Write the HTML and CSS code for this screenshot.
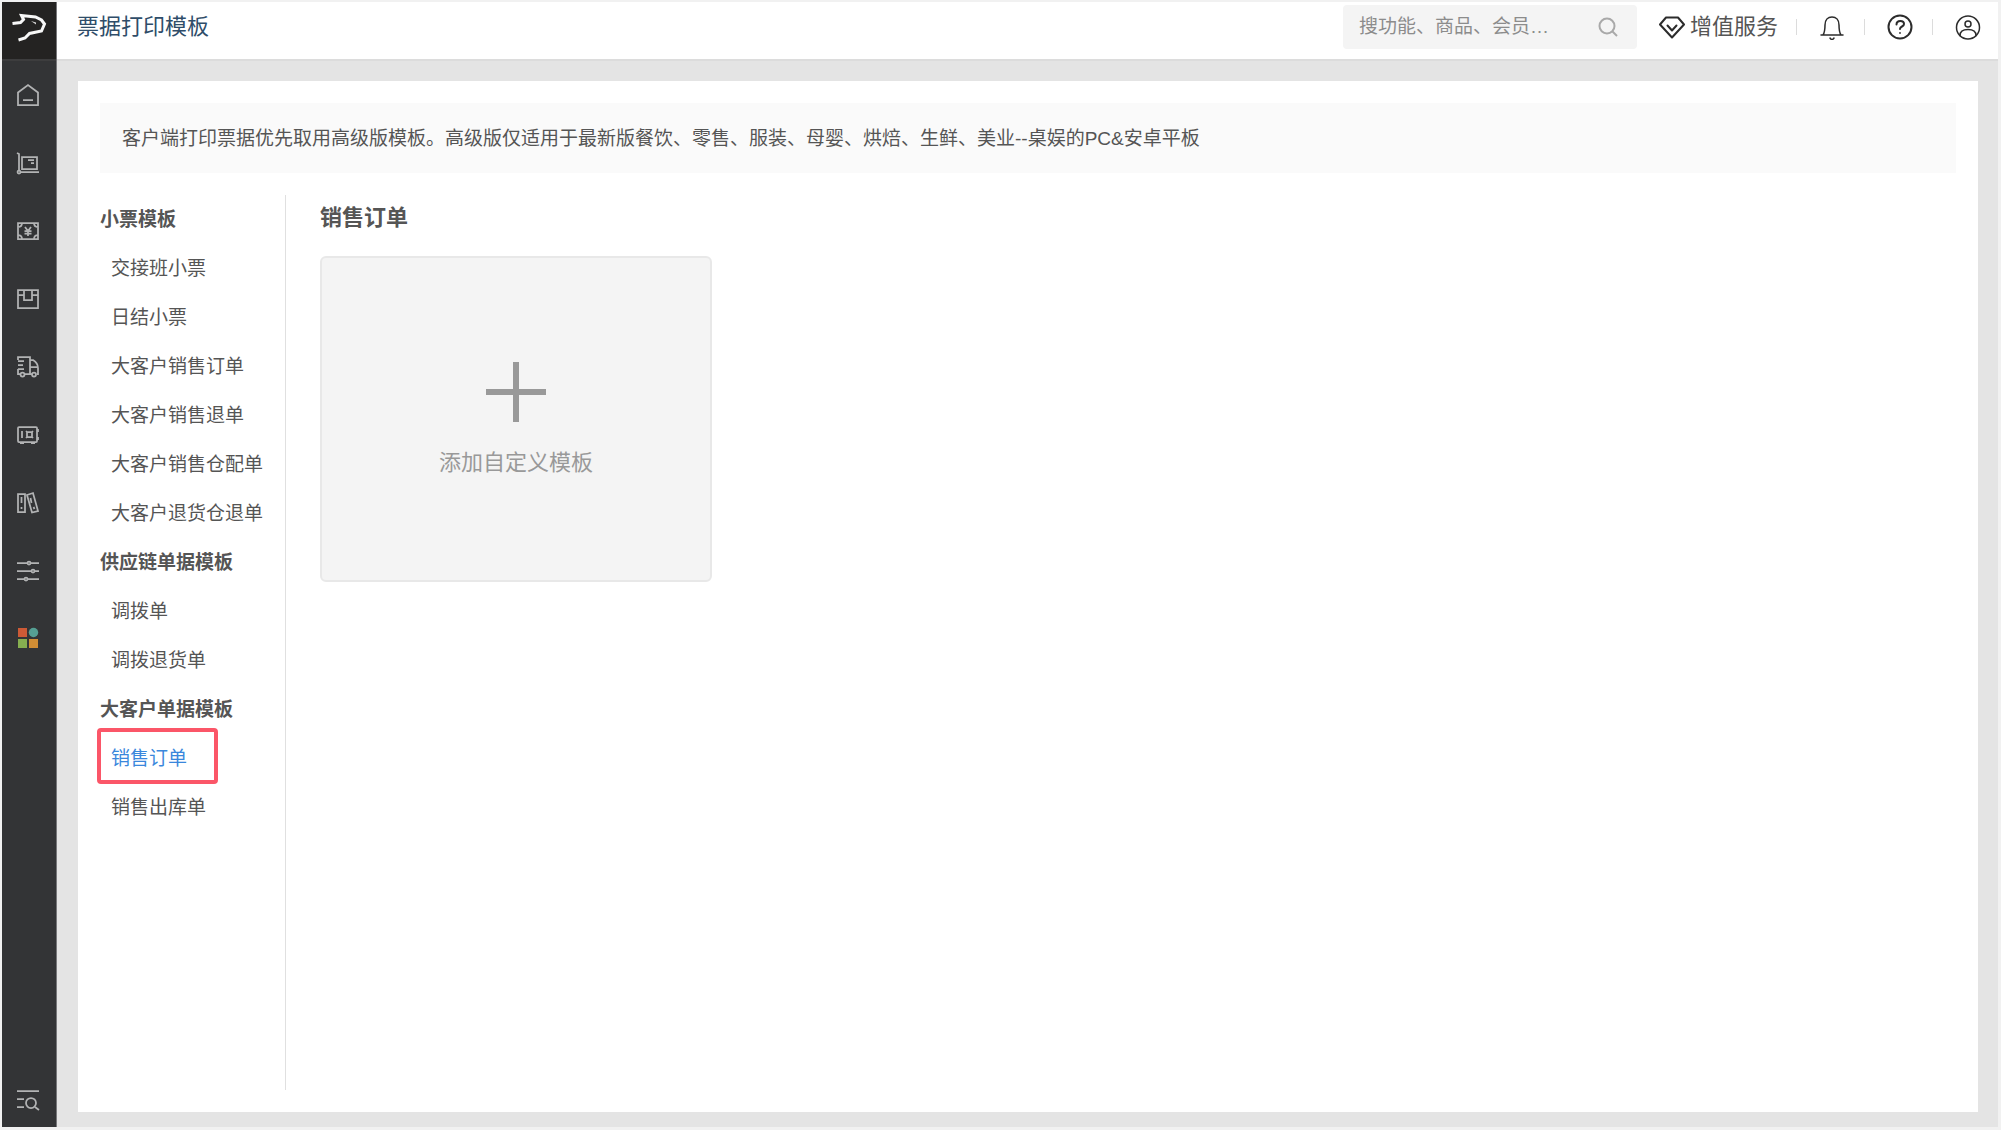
FILE: index.html
```html
<!DOCTYPE html>
<html lang="zh-CN">
<head>
    <meta charset="UTF-8">
    <meta name="viewport" content="width=device-width, initial-scale=1.0">
    <title>票据打印模板</title>
    <link rel="stylesheet" href="styles.css">
</head>
<body>
    <div class="app">
        <nav class="sidebar" aria-label="主导航">
            <a class="logo" href="#" aria-label="首页">
                <svg width="54" height="57" viewBox="0 0 54 57">
                    <path d="M10.500 21.500l8-1 3-3-2-4 14 1.500 6 3 3 4-3 7-12 2.500-4.500 4.500-6.500 2" stroke="#f7f7f7" stroke-width="3"/>
                    <path d="M29 19l5 1.500v2z" fill="#d8d8d8"/>
                </svg>
            </a>
            <a class="nav-item" href="#" aria-label="概况">
                <svg width="24" height="24" viewBox="0 0 24 24"><path d="M2 9.500 12 2l10 7.500V22H2zM7 17h10"/></svg>
            </a>
            <a class="nav-item" href="#" aria-label="商品">
                <svg width="24" height="24" viewBox="0 0 24 24"><path d="M1 2l2 1v17M5 21h18M6 6h15v12H6z"/><path d="M12 9h6M15 12h3"/><circle cx="3" cy="21" r="1.500"/></svg>
            </a>
            <a class="nav-item" href="#" aria-label="营销">
                <svg width="24" height="24" viewBox="0 0 24 24"><path d="M2 4h20v16H2zM2 8q4 0 4-4M18 4q0 4 4 4M2 16q4 0 4 4M22 16q-4 0-4 4"/><path d="M9 8l3 4 3-4M12 12v5M8.500 12h7M8.500 14.500h7"/></svg>
            </a>
            <a class="nav-item" href="#" aria-label="库存">
                <svg width="24" height="24" viewBox="0 0 24 24"><path d="M2 3h20v18H2zM2 8h6M16 8h6M8 3v10h8V3"/></svg>
            </a>
            <a class="nav-item" href="#" aria-label="配送">
                <svg width="24" height="24" viewBox="0 0 24 24"><path d="M2 5V2h12v17H9M2 6h6M2 10h5M2 14h6M2 14v5h2M14 5h3q5 3 5 8v6h-1M14 12h8M14 19h2"/><circle cx="6.500" cy="19.500" r="2"/><circle cx="18" cy="19.500" r="2"/></svg>
            </a>
            <a class="nav-item" href="#" aria-label="资金">
                <svg width="24" height="24" viewBox="0 0 24 24"><rect x="2" y="4" width="19" height="15" rx="1"/><path d="M6 8v7M11 9h5v5h-5zM10 8l1 1M17 8l-1 1M10 15l1-1M17 15l-1-1M22 6v3M22 14v3M4 20h4M15 20h4"/></svg>
            </a>
            <a class="nav-item" href="#" aria-label="报表">
                <svg width="24" height="24" viewBox="0 0 24 24"><path d="M2 3h7v18H2zM11 4l6-2 5 18-6 1.500zM5.500 6v6M5.500 16v2M14.500 7l1 5M17.500 16l1 2"/></svg>
            </a>
            <a class="nav-item" href="#" aria-label="设置">
                <svg width="24" height="24" viewBox="0 0 24 24"><path d="M1 4h10M15 4h8M1 12h14M19 12h4M1 20h7M12 20h11"/><circle cx="13" cy="4" r="1.500"/><circle cx="17" cy="12" r="1.500"/><circle cx="10" cy="20" r="1.500"/></svg>
            </a>
            <a class="nav-item nav-apps" href="#" aria-label="应用">
                <svg width="24" height="24" viewBox="0 0 24 24"><rect x="2" y="1" width="9" height="9" fill="#cc5a36"/><circle cx="17.500" cy="5.500" r="4.750" fill="#559f93"/><rect x="2" y="12" width="9" height="9" fill="#86ae50"/><rect x="13" y="12" width="9" height="9" fill="#d08d35"/></svg>
            </a>
            <a class="nav-item nav-bottom" href="#" aria-label="菜单搜索">
                <svg width="24" height="24" viewBox="0 0 24 24"><path d="M1 3h22M1 11h7M1 19h7M19 19l4 3"/><circle cx="15" cy="15" r="5"/></svg>
            </a>
        </nav>

        <div class="page">
            <header class="header">
                <h1 class="page-title">票据打印模板</h1>
                <div class="search">
                    <input class="search-input" type="text" aria-label="搜索" placeholder="搜功能、商品、会员…">
                    <button class="search-button" type="button" aria-label="搜索">
                        <svg width="20" height="20" viewBox="0 0 20 20"><circle cx="9" cy="9" r="7.500"/><path d="M14 14l5 5"/></svg>
                    </button>
                </div>
                <a class="services" href="#">
                    <svg width="26" height="26" viewBox="0 0 26 26"><path d="M7 3.500h12l6 7-12 13-12-13z"/><path d="M8.500 11.500l4.500 5 4.500-5"/></svg>
                    增值服务
                </a>
                <div class="tools">
                    <button class="tool" type="button" aria-label="消息">
                        <svg width="26" height="26" viewBox="0 0 26 26"><path d="M2 21h22M4 21q2-3 2-10c0-5 3-8 7-8s7 3 7 8q0 7 2 10M11 24q2 3 4 0"/></svg>
                    </button>
                    <button class="tool" type="button" aria-label="帮助">
                        <svg width="26" height="26" viewBox="0 0 26 26"><circle cx="13" cy="13" r="11.500" stroke-width="2"/><path d="M9.500 10.500c0-5 7.500-4.500 7.500-.500 0 3-4 2-4 5" stroke-width="2"/><circle cx="13" cy="19" r=".3"/></svg>
                    </button>
                    <button class="tool" type="button" aria-label="账号">
                        <svg width="26" height="26" viewBox="0 0 26 26"><circle cx="13" cy="13.500" r="11.500"/><circle cx="13" cy="10" r="3"/><path d="M5 21.500c0-4 3-6 8-6s8 2 8 6"/></svg>
                    </button>
                </div>
            </header>

            <main class="main">
                <div class="panel">
                    <p class="notice">客户端打印票据优先取用高级版模板。高级版仅适用于最新版餐饮、零售、服装、母婴、烘焙、生鲜、美业--桌娱的PC&amp;安卓平板</p>
                    <div class="content">
                        <aside class="menu">
                            <h3>小票模板</h3>
                            <a href="#">交接班小票</a>
                            <a href="#">日结小票</a>
                            <a href="#">大客户销售订单</a>
                            <a href="#">大客户销售退单</a>
                            <a href="#">大客户销售仓配单</a>
                            <a href="#">大客户退货仓退单</a>
                            <h3>供应链单据模板</h3>
                            <a href="#">调拨单</a>
                            <a href="#">调拨退货单</a>
                            <h3>大客户单据模板</h3>
                            <a class="active" href="#">销售订单</a>
                            <a href="#">销售出库单</a>
                        </aside>
                        <section class="templates">
                            <h2>销售订单</h2>
                            <button class="add-card" type="button">
                                <svg width="60" height="60" viewBox="0 0 60 60"><path d="M30 0v60M0 30h60"/></svg>
                                <span>添加自定义模板</span>
                            </button>
                        </section>
                    </div>
                </div>
            </main>
        </div>
    </div>
</body>
</html>
```

FILE: styles.css
```css
*, *::after {
    box-sizing: border-box;
}

body {
    margin: 0;
    font-family: "Liberation Sans", "Noto Sans CJK SC", sans-serif;
    font-size: 19px;
    color: #555;
    background: #f1f1f1;
}

h1, h2, h3, p {
    margin: 0;
}

a {
    color: inherit;
    text-decoration: none;
}

button {
    padding: 0;
    border: none;
    background: none;
    font: inherit;
    color: inherit;
    cursor: pointer;
}

svg {
    display: block;
    fill: none;
}

.app {
    display: flex;
    min-height: 100vh;
    padding: 2px 3px 3px 2px;
}

/* Sidebar */
.sidebar {
    display: flex;
    flex-direction: column;
    flex: none;
    width: 55px;
    background: #333436;
    border-right: 1px solid #77777a;
}

.logo {
    height: 59px;
    background: #242322;
    border-bottom: 2px solid #3d3d3e;
}

.nav-item {
    display: flex;
    align-items: center;
    justify-content: center;
    height: 68px;
    padding-right: 2px;
    stroke: #b2b3b4;
    stroke-width: 1.75;
}

.nav-apps {
    stroke: none;
}

.nav-bottom {
    height: 54px;
    margin-top: auto;
}

/* Header */
.page {
    display: flex;
    flex-direction: column;
    flex: 1;
    min-width: 0;
}

.header {
    display: flex;
    align-items: center;
    height: 59px;
    padding: 0 17px 8px 20px;
    line-height: 26px;
    background: #fff;
    border-bottom: 2px solid #dcdcdc;
}

.page-title {
    margin-right: auto;
    font-size: 22px;
    font-weight: normal;
    color: #2f4d69;
}

.search {
    display: flex;
    align-items: center;
    width: 294px;
    height: 44px;
    padding: 0 19px 0 16px;
    background: #f4f4f4;
    border-radius: 4px;
}

.search-input {
    flex: 1;
    min-width: 0;
    padding: 0;
    border: none;
    outline: none;
    background: none;
    font: inherit;
    color: #555;
}

.search-input::placeholder {
    color: #8c8c8c;
}

.search-button {
    stroke: #a9a9a9;
    stroke-width: 2;
}

.services {
    display: flex;
    align-items: center;
    gap: 5px;
    margin-left: 22px;
    padding-right: 18px;
    font-size: 22px;
}

.services svg,
.tool svg {
    stroke: #2c2c2c;
    stroke-width: 2;
    stroke-linejoin: round;
    stroke-linecap: round;
}

.tools {
    display: flex;
    gap: 19px;
}

.tool {
    height: 26px;
    padding-left: 23px;
    /* short divider before each tool */
    background: linear-gradient(#dcdcdc, #dcdcdc) left center / 1px 16px no-repeat;
}

.tool svg {
    stroke-width: 1.5;
}

/* Main panel */
.main {
    display: flex;
    flex: 1;
    padding: 20px 20px 15px 21px;
    background: #e4e4e4;
}

.panel {
    display: flex;
    flex-direction: column;
    flex: 1;
    min-width: 0;
    padding: 22px;
    background: #fff;
}

.notice {
    padding: 21px 22px 19px;
    line-height: 30px;
    background: #fafafa;
}

.content {
    display: flex;
    flex: 1;
    margin-top: 22px;
}

.menu {
    flex: none;
    width: 186px;
    border-right: 1px solid #e0e0e0;
}

.menu h3 {
    font-size: 19px;
    line-height: 49px;
}

.menu a {
    display: block;
    position: relative;
    padding-left: 11px;
    line-height: 49px;
}

.menu .active {
    color: #3a87dc;
}

/* highlight frame around the current entry */
.menu .active::after {
    content: "";
    position: absolute;
    top: -6px;
    left: -3px;
    width: 121px;
    height: 56px;
    border: 4px solid #fb5668;
    border-radius: 4px;
}

.templates {
    flex: 1;
    padding-left: 34px;
}

.templates h2 {
    margin-bottom: 15px;
    font-size: 22px;
    line-height: 46px;
}

.add-card {
    display: flex;
    flex-direction: column;
    align-items: center;
    justify-content: center;
    gap: 22px;
    width: 392px;
    height: 326px;
    font-size: 22px;
    color: #999;
    background: #f4f4f4;
    border: 2px solid #e8e8e8;
    border-radius: 6px;
}

.add-card svg {
    stroke: #999;
    stroke-width: 6;
}
```
